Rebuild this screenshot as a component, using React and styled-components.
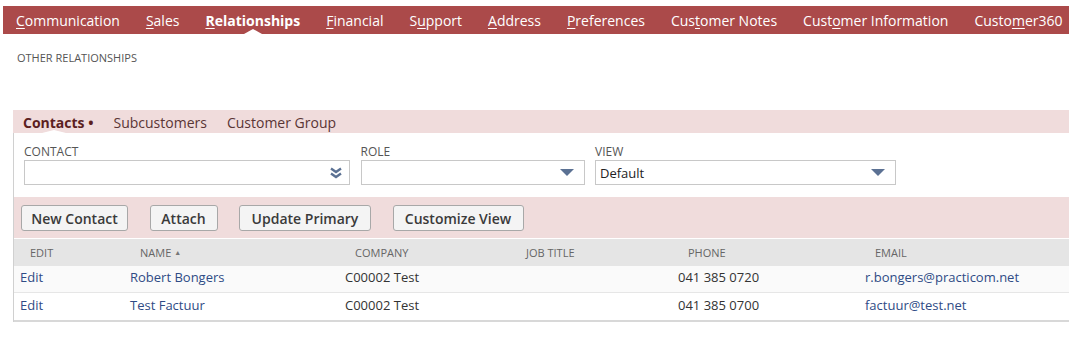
import React from 'react'
import styled, { createGlobalStyle } from 'styled-components'

const GlobalStyle = createGlobalStyle`
  body {
    margin: 0;
    background: #fff;
    font-family: 'Open Sans', 'Liberation Sans', sans-serif;
    overflow: hidden;
  }
`

const navItems = [
  { pre: '', key: 'C', post: 'ommunication' },
  { pre: '', key: 'S', post: 'ales' },
  { pre: '', key: 'R', post: 'elationships', active: true },
  { pre: '', key: 'F', post: 'inancial' },
  { pre: 'S', key: 'u', post: 'pport' },
  { pre: '', key: 'A', post: 'ddress' },
  { pre: '', key: 'P', post: 'references' },
  { pre: 'Cus', key: 't', post: 'omer Notes' },
  { pre: 'Cust', key: 'o', post: 'mer Information' },
  { pre: 'Custo', key: 'm', post: 'er360' },
]

const buttons = [
  { label: 'New Contact', width: 107 },
  { label: 'Attach', width: 68 },
  { label: 'Update Primary', width: 132 },
  { label: 'Customize View', width: 131 },
]

const columns = ['Edit', 'Name', 'Company', 'Job Title', 'Phone', 'Email']

const rows = [
  { name: 'Robert Bongers', company: 'C00002 Test', phone: '041 385 0720', email: 'r.bongers@practicom.net' },
  { name: 'Test Factuur', company: 'C00002 Test', phone: '041 385 0700', email: 'factuur@test.net' },
]

export default function App() {
  return (
    <Page>
      <GlobalStyle />
      <NavBar>
        {navItems.map((item, i) => (
          <NavItem key={i} $active={item.active}>
            {item.pre}
            <u>{item.key}</u>
            {item.post}
          </NavItem>
        ))}
      </NavBar>

      <SectionTitle>Other Relationships</SectionTitle>

      <Panel>
        <TabBar>
          <Tab $active>Contacts •</Tab>
          <Tab>Subcustomers</Tab>
          <Tab>Customer Group</Tab>
        </TabBar>

        <Body>
          <Fields>
            <Field $width={326}>
              <Label>Contact</Label>
              <Select>
                <svg width="12" height="12" viewBox="0 0 12 12">
                  <path d="M1 1.5 L6 5 L11 1.5" stroke="#5b7193" strokeWidth="2.4" fill="none" />
                  <path d="M1 6.5 L6 10 L11 6.5" stroke="#5b7193" strokeWidth="2.4" fill="none" />
                </svg>
              </Select>
            </Field>
            <Field $width={224}>
              <Label>Role</Label>
              <Select>
                <Caret />
              </Select>
            </Field>
            <Field $width={301}>
              <Label>View</Label>
              <Select>
                <SelectValue>Default</SelectValue>
                <Caret />
              </Select>
            </Field>
          </Fields>

          <ButtonBar>
            {buttons.map((b) => (
              <Button key={b.label} $width={b.width}>
                {b.label}
              </Button>
            ))}
          </ButtonBar>

          <Table>
            <HeadRow>
              {columns.map((c) => (
                <HeadCell key={c}>
                  {c}
                  {c === 'Name' && <SortArrow>▲</SortArrow>}
                </HeadCell>
              ))}
            </HeadRow>
            {rows.map((r, i) => (
              <Row key={i} $odd={i % 2 === 0}>
                <Cell $link>Edit</Cell>
                <Cell $link>{r.name}</Cell>
                <Cell>{r.company}</Cell>
                <Cell></Cell>
                <Cell>{r.phone}</Cell>
                <Cell $link>{r.email}</Cell>
              </Row>
            ))}
          </Table>
        </Body>
      </Panel>
    </Page>
  )
}

const Page = styled.div`
  width: 1069px;
  height: 349px;
  padding-top: 6px;
  box-sizing: border-box;
`

const NavBar = styled.div`
  margin-left: 3px;
  height: 28px;
  background: #ab4a4a;
  display: flex;
  align-items: center;
  gap: 26px;
  padding-left: 13px;
  white-space: nowrap;
  overflow: hidden;
`

const NavItem = styled.div`
  position: relative;
  height: 28px;
  line-height: 30px;
  font-size: 14px;
  color: #fff;
  font-weight: ${(p) => (p.$active ? 700 : 400)};
  u {
    text-underline-offset: 2px;
  }
  &::after {
    content: '';
    display: ${(p) => (p.$active ? 'block' : 'none')};
    position: absolute;
    bottom: 0;
    left: 50%;
    margin-left: -9px;
    border-left: 9px solid transparent;
    border-right: 9px solid transparent;
    border-bottom: 5px solid #fff;
  }
`

const SectionTitle = styled.div`
  margin: 16px 0 0 17px;
  font-size: 11px;
  color: #555;
  text-transform: uppercase;
  height: 16px;
  line-height: 16px;
`

const Panel = styled.div`
  margin: 44px 0 0 13px;
`

const TabBar = styled.div`
  height: 23px;
  background: #f0dcdc;
  display: flex;
  align-items: flex-start;
  gap: 20px;
  padding-left: 10px;
`

const Tab = styled.div`
  position: relative;
  height: 23px;
  font-size: 14px;
  line-height: 26px;
  color: ${(p) => (p.$active ? '#5c1f1f' : '#5a3535')};
  font-weight: ${(p) => (p.$active ? 700 : 400)};
  &::after {
    content: '';
    display: ${(p) => (p.$active ? 'block' : 'none')};
    position: absolute;
    bottom: 0;
    left: 50%;
    margin-left: -16px;
    border-left: 12px solid transparent;
    border-right: 12px solid transparent;
    border-bottom: 3px solid #fff;
  }
`

const Body = styled.div`
  border-left: 1px solid #d0d0d0;
`

const Fields = styled.div`
  display: flex;
  gap: 10.5px;
  padding: 11px 0 0 10px;
`

const Field = styled.div`
  width: ${(p) => p.$width}px;
  display: flex;
  flex-direction: column;
`

const Label = styled.div`
  font-size: 12px;
  line-height: 16px;
  color: #555;
  text-transform: uppercase;
`

const Select = styled.div`
  height: 25px;
  border: 1px solid #c8c8c8;
  box-sizing: border-box;
  display: flex;
  align-items: center;
  justify-content: flex-end;
  padding: 0 7px 0 4px;
  background: #fff;
`

const SelectValue = styled.span`
  flex: 1;
  font-size: 13px;
  color: #222;
`

const Caret = styled.span`
  width: 0;
  height: 0;
  border-left: 7px solid transparent;
  border-right: 7px solid transparent;
  border-top: 7px solid #5b7193;
  margin-right: 3px;
`

const ButtonBar = styled.div`
  margin-top: 12px;
  height: 41px;
  background: #f0dcdc;
  display: flex;
  align-items: center;
  padding-left: 7px;
  gap: 21.5px;
`

const Button = styled.button`
  width: ${(p) => p.$width}px;
  height: 26px;
  padding: 1px 0 0;
  font-family: 'Open Sans', 'Liberation Sans', sans-serif;
  font-size: 14px;
  font-weight: 600;
  color: #3a3a3a;
  background: #f4f4f4;
  border: 1px solid #a8a8a8;
  border-radius: 3px;
  white-space: nowrap;
`

const grid = `
  display: grid;
  grid-template-columns: 110px 215px 171px 162px 187px 1fr;
`

const Table = styled.div`
  margin-top: 1px;
  border-bottom: 2px solid #d8d8d8;
`

const HeadRow = styled.div`
  ${grid}
  height: 27px;
  background: #e5e5e5;
  align-items: center;
`

const HeadCell = styled.div`
  padding-left: 16px;
  font-size: 11px;
  color: #666;
  text-transform: uppercase;
`

const SortArrow = styled.span`
  font-size: 7px;
  margin-left: 3px;
  position: relative;
  top: -2px;
  color: #777;
`

const Row = styled.div`
  ${grid}
  height: 27px;
  box-sizing: border-box;
  padding-bottom: 4px;
  align-items: center;
  background: ${(p) => (p.$odd ? '#fafafa' : '#fff')};
  border-bottom: 1px solid #e6e6e6;
  &:last-child {
    border-bottom: none;
  }
`

const Cell = styled.div`
  padding-left: 6px;
  font-size: 13px;
  color: ${(p) => (p.$link ? '#2f4b85' : '#333')};
  white-space: nowrap;
`
